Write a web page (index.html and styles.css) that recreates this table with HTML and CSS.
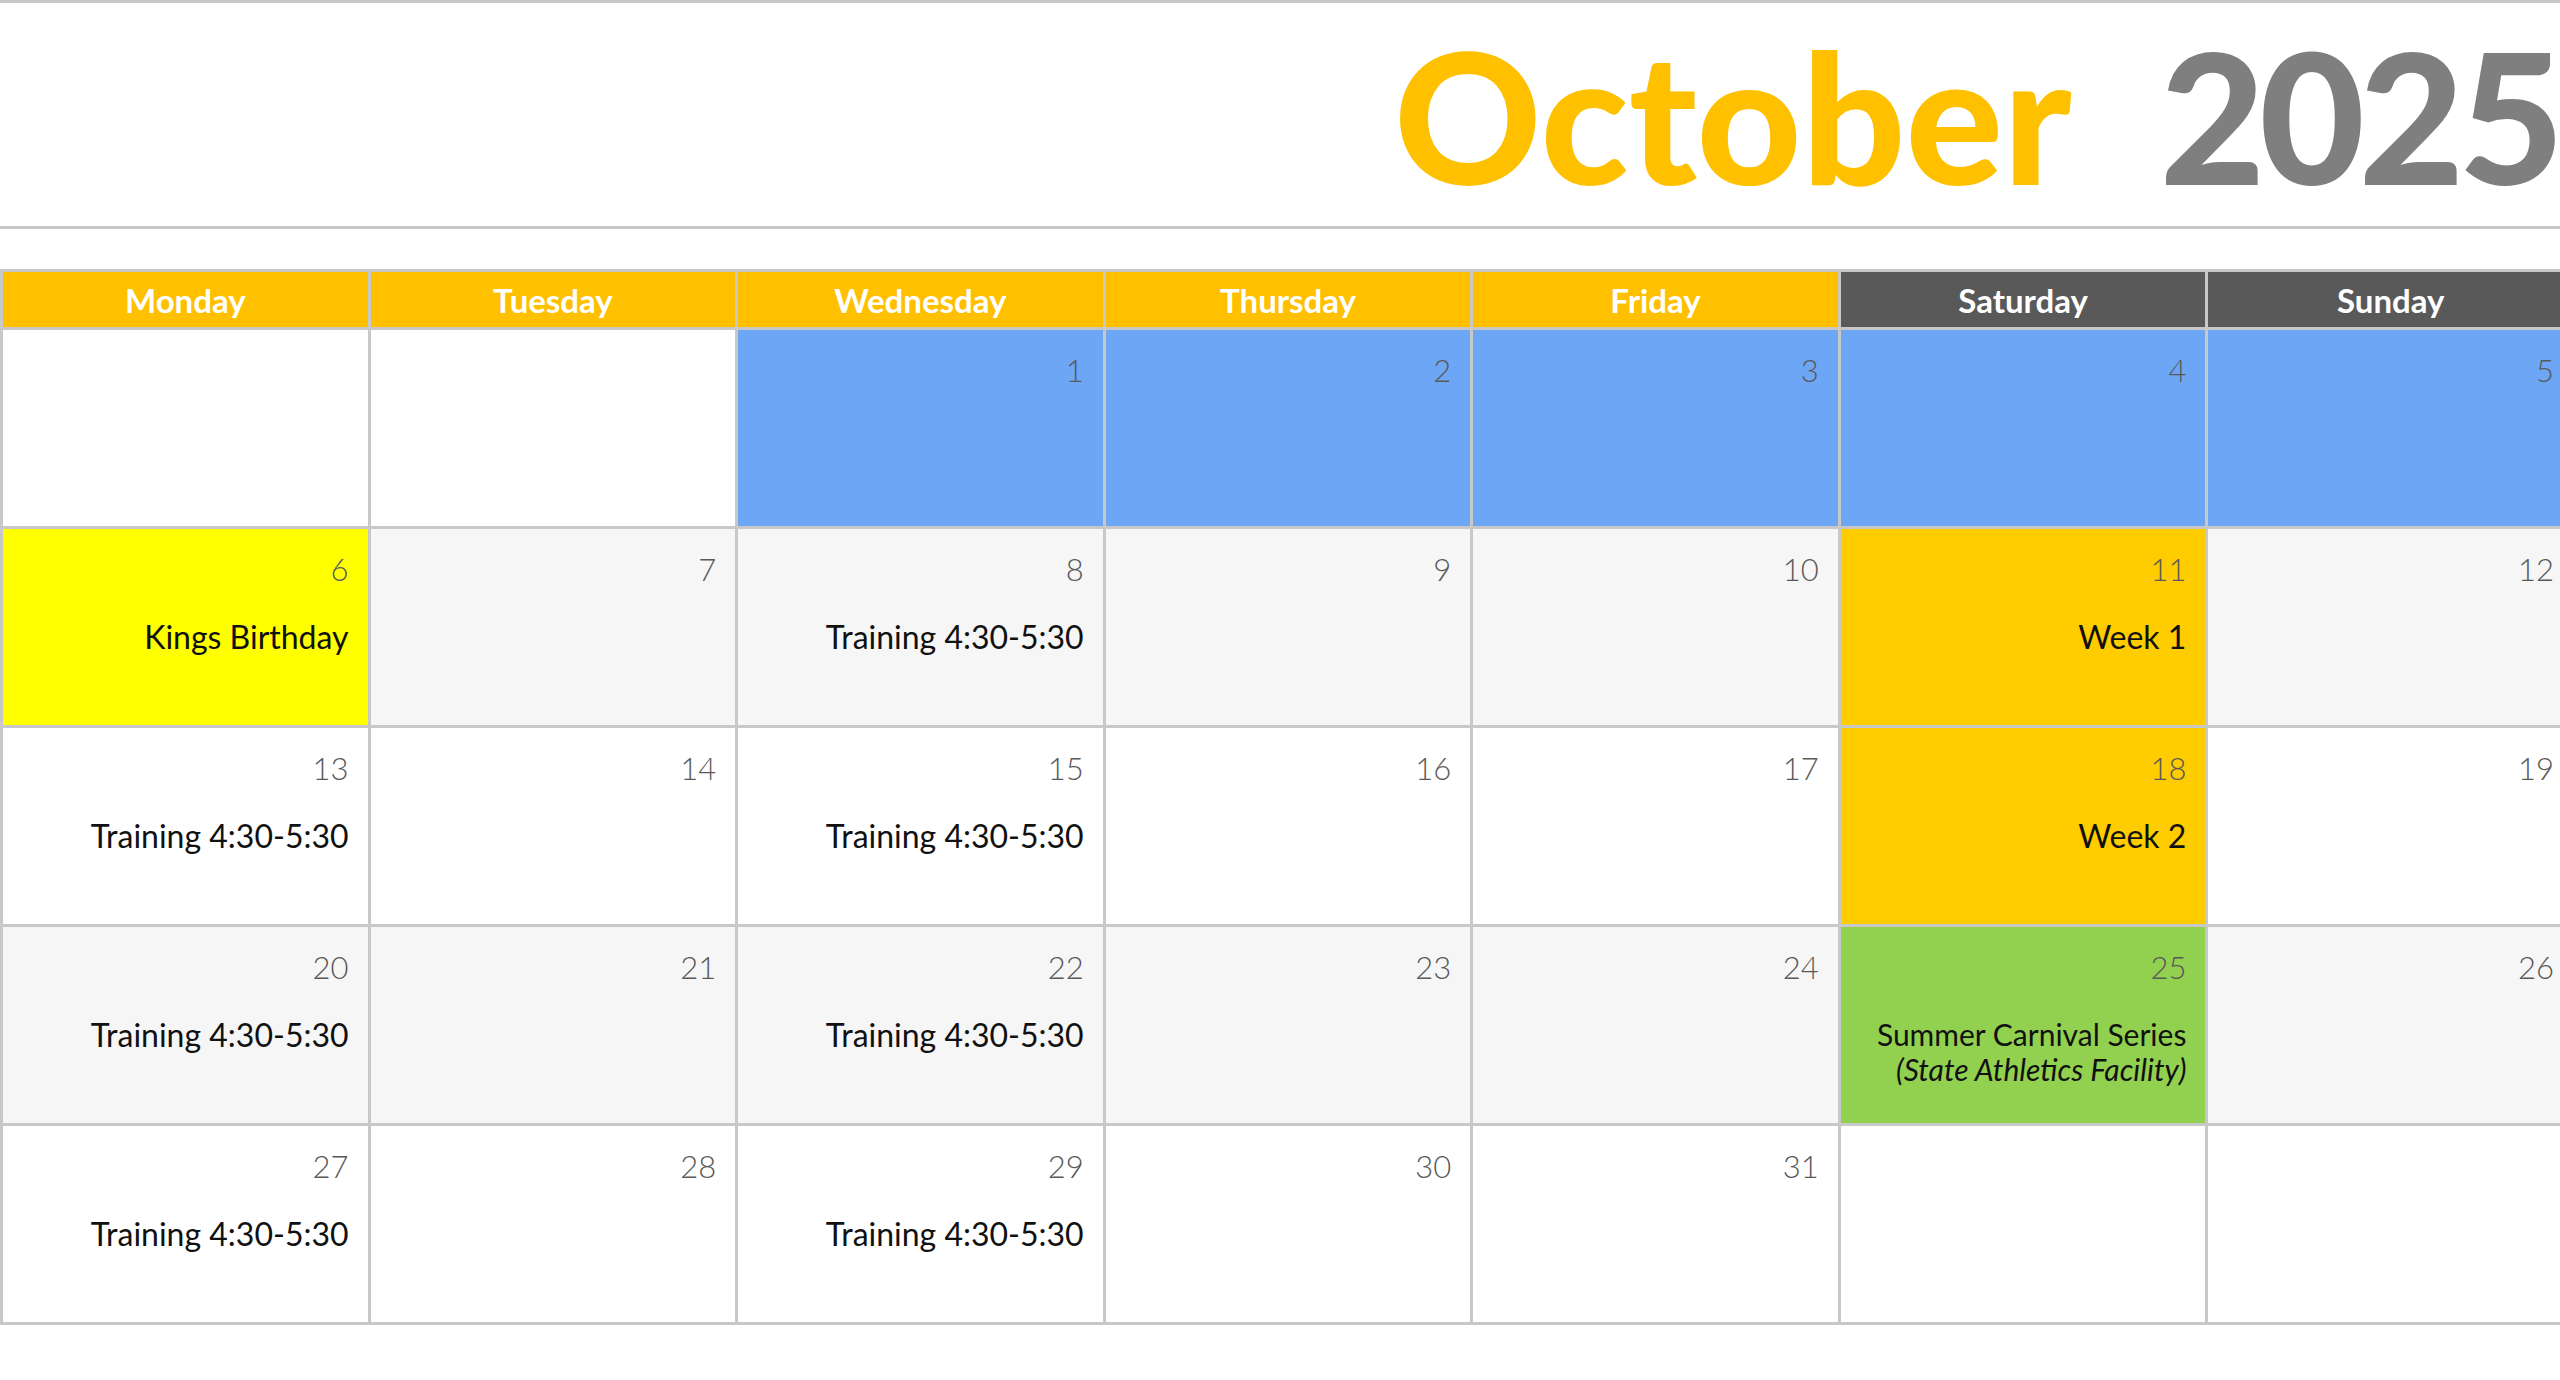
FILE: index.html
```html
<!DOCTYPE html>
<html>
<head>
  <title>October 2025</title>
  <link rel="stylesheet" href="styles.css">
</head>
<body>
  <div class="page">
    <div class="title-bar">
      <span class="month">October</span>
      <span class="year">2025</span>
    </div>

    <table class="calendar">
      <thead>
        <tr>
          <th>Monday</th>
          <th>Tuesday</th>
          <th>Wednesday</th>
          <th>Thursday</th>
          <th>Friday</th>
          <th class="weekend">Saturday</th>
          <th class="weekend">Sunday</th>
        </tr>
      </thead>
      <tbody>
        <tr>
          <td></td>
          <td></td>
          <td class="blue"><div class="date">1</div></td>
          <td class="blue"><div class="date">2</div></td>
          <td class="blue"><div class="date">3</div></td>
          <td class="blue"><div class="date">4</div></td>
          <td class="blue"><div class="date">5</div></td>
        </tr>
        <tr class="shade">
          <td class="holiday"><div class="date">6</div><div class="event">Kings Birthday</div></td>
          <td><div class="date">7</div></td>
          <td><div class="date">8</div><div class="event">Training 4:30-5:30</div></td>
          <td><div class="date">9</div></td>
          <td><div class="date">10</div></td>
          <td class="week"><div class="date">11</div><div class="event">Week 1</div></td>
          <td><div class="date">12</div></td>
        </tr>
        <tr>
          <td><div class="date">13</div><div class="event">Training 4:30-5:30</div></td>
          <td><div class="date">14</div></td>
          <td><div class="date">15</div><div class="event">Training 4:30-5:30</div></td>
          <td><div class="date">16</div></td>
          <td><div class="date">17</div></td>
          <td class="week"><div class="date">18</div><div class="event">Week 2</div></td>
          <td><div class="date">19</div></td>
        </tr>
        <tr class="shade">
          <td><div class="date">20</div><div class="event">Training 4:30-5:30</div></td>
          <td><div class="date">21</div></td>
          <td><div class="date">22</div><div class="event">Training 4:30-5:30</div></td>
          <td><div class="date">23</div></td>
          <td><div class="date">24</div></td>
          <td class="carnival">
            <div class="date">25</div>
            <div class="event small">Summer Carnival Series<br><em>(State Athletics Facility)</em></div>
          </td>
          <td><div class="date">26</div></td>
        </tr>
        <tr>
          <td><div class="date">27</div><div class="event">Training 4:30-5:30</div></td>
          <td><div class="date">28</div></td>
          <td><div class="date">29</div><div class="event">Training 4:30-5:30</div></td>
          <td><div class="date">30</div></td>
          <td><div class="date">31</div></td>
          <td></td>
          <td></td>
        </tr>
      </tbody>
    </table>
  </div>
</body>
</html>
```

FILE: styles.css
```css
/* Calendário mensal */
html, body {
  margin: 0;
  overflow: hidden;
  background: #fff;
}

body {
  font-family: Lato, "Open Sans", Arial, sans-serif;
}

.page {
  width: 2576px;
}

/* Título */
.title-bar {
  display: flex;
  justify-content: flex-end;
  align-items: center;
  gap: 88px;
  height: 223px;
  padding-right: 18px;
  border-top: 3px solid #c8c8c8;
  border-bottom: 3px solid #c8c8c8;
  margin-bottom: 40px;
  font-weight: 900;
  font-size: 182px;
  line-height: 1;
}

.month {
  color: #ffc000;
}

.year {
  color: #7f7f7f;
  letter-spacing: -6px;
}

/* Tabela */
.calendar {
  width: 2576px;
  table-layout: fixed;
  border-collapse: collapse;
}

.calendar th,
.calendar td {
  border: 3px solid #c8c8c8;
  padding: 0;
}

.calendar th {
  height: 55px;
  background-color: #ffc000;
  color: #fff;
  font-size: 33px;
  font-weight: 700;
  text-align: center;
  vertical-align: middle;
}

.calendar th.weekend {
  background-color: #595959;
}

.calendar td {
  height: 174px;
  vertical-align: top;
  text-align: right;
  padding: 22px 19px 0 0;
  background-color: #fff;
}

.calendar tr.shade td {
  background-color: #f6f6f6;
}

.calendar td.blue {
  background-color: #6ca6f5;
}

.calendar tr td.holiday {
  background-color: #ffff00;
}

.calendar tr td.week {
  background-color: #ffcc00;
}

.calendar tr td.carnival {
  background-color: #92d050;
}

.date {
  font-size: 31px;
  font-weight: 300;
  line-height: 37px;
  color: #595959;
}

.event {
  margin-top: 30px;
  font-size: 32px;
  line-height: 38px;
  color: #111;
}

.event.small {
  margin-top: 31px;
  font-size: 30px;
  line-height: 35px;
}
```
